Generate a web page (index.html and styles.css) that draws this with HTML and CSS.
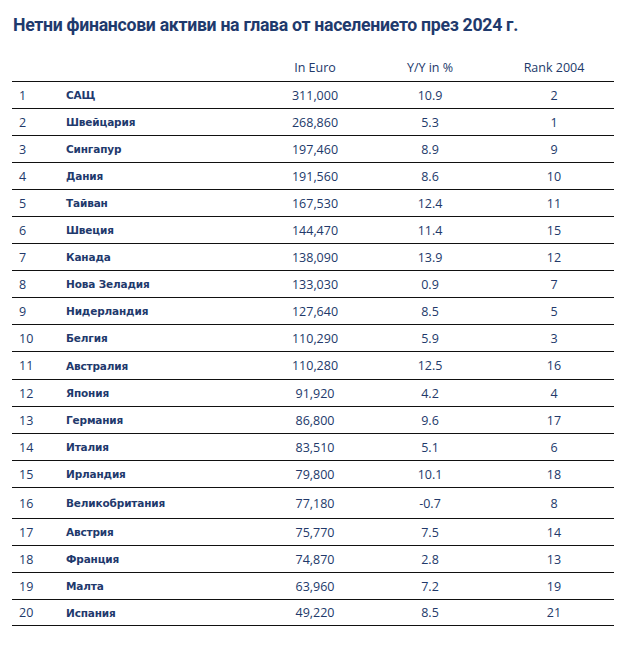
FILE: index.html
```html
<!DOCTYPE html>
<html lang="bg">
<head>
<meta charset="utf-8">
<title>Нетни финансови активи</title>
<link rel="stylesheet" href="styles.css">
</head>
<body>
<div class="page">
  <h1 class="title">Нетни финансови активи на глава от населението през 2024 г.</h1>
  <div class="table">
    <div class="row head"><span></span><span></span><span class="c-euro">In Euro</span><span class="c-yy">Y/Y in %</span><span class="c-rank">Rank 2004</span></div>
    <div class="row"><span class="c-no">1</span><span class="c-name">САЩ</span><span class="c-euro">311,000</span><span class="c-yy">10.9</span><span class="c-rank">2</span></div>
    <div class="row"><span class="c-no">2</span><span class="c-name">Швейцария</span><span class="c-euro">268,860</span><span class="c-yy">5.3</span><span class="c-rank">1</span></div>
    <div class="row"><span class="c-no">3</span><span class="c-name">Сингапур</span><span class="c-euro">197,460</span><span class="c-yy">8.9</span><span class="c-rank">9</span></div>
    <div class="row"><span class="c-no">4</span><span class="c-name">Дания</span><span class="c-euro">191,560</span><span class="c-yy">8.6</span><span class="c-rank">10</span></div>
    <div class="row"><span class="c-no">5</span><span class="c-name">Тайван</span><span class="c-euro">167,530</span><span class="c-yy">12.4</span><span class="c-rank">11</span></div>
    <div class="row"><span class="c-no">6</span><span class="c-name">Швеция</span><span class="c-euro">144,470</span><span class="c-yy">11.4</span><span class="c-rank">15</span></div>
    <div class="row"><span class="c-no">7</span><span class="c-name">Канада</span><span class="c-euro">138,090</span><span class="c-yy">13.9</span><span class="c-rank">12</span></div>
    <div class="row"><span class="c-no">8</span><span class="c-name">Нова Зеладия</span><span class="c-euro">133,030</span><span class="c-yy">0.9</span><span class="c-rank">7</span></div>
    <div class="row"><span class="c-no">9</span><span class="c-name">Нидерландия</span><span class="c-euro">127,640</span><span class="c-yy">8.5</span><span class="c-rank">5</span></div>
    <div class="row"><span class="c-no">10</span><span class="c-name">Белгия</span><span class="c-euro">110,290</span><span class="c-yy">5.9</span><span class="c-rank">3</span></div>
    <div class="row tall1"><span class="c-no">11</span><span class="c-name">Австралия</span><span class="c-euro">110,280</span><span class="c-yy">12.5</span><span class="c-rank">16</span></div>
    <div class="row"><span class="c-no">12</span><span class="c-name">Япония</span><span class="c-euro">91,920</span><span class="c-yy">4.2</span><span class="c-rank">4</span></div>
    <div class="row"><span class="c-no">13</span><span class="c-name">Германия</span><span class="c-euro">86,800</span><span class="c-yy">9.6</span><span class="c-rank">17</span></div>
    <div class="row"><span class="c-no">14</span><span class="c-name">Италия</span><span class="c-euro">83,510</span><span class="c-yy">5.1</span><span class="c-rank">6</span></div>
    <div class="row"><span class="c-no">15</span><span class="c-name">Ирландия</span><span class="c-euro">79,800</span><span class="c-yy">10.1</span><span class="c-rank">18</span></div>
    <div class="row tall"><span class="c-no">16</span><span class="c-name">Великобритания</span><span class="c-euro">77,180</span><span class="c-yy">-0.7</span><span class="c-rank">8</span></div>
    <div class="row"><span class="c-no">17</span><span class="c-name">Австрия</span><span class="c-euro">75,770</span><span class="c-yy">7.5</span><span class="c-rank">14</span></div>
    <div class="row"><span class="c-no">18</span><span class="c-name">Франция</span><span class="c-euro">74,870</span><span class="c-yy">2.8</span><span class="c-rank">13</span></div>
    <div class="row"><span class="c-no">19</span><span class="c-name">Малта</span><span class="c-euro">63,960</span><span class="c-yy">7.2</span><span class="c-rank">19</span></div>
    <div class="row short"><span class="c-no">20</span><span class="c-name">Испания</span><span class="c-euro">49,220</span><span class="c-yy">8.5</span><span class="c-rank">21</span></div>
  </div>
</div>
</body>
</html>
```

FILE: styles.css
```css
html, body {
  margin: 0;
  padding: 0;
  background: #ffffff;
}

.page {
  padding: 14px 0 0 12px;
  width: 602px;
}

.title {
  margin: 0 0 0 1px;
  font-family: Roboto, "Open Sans", sans-serif;
  font-weight: 700;
  font-size: 17.7px;
  line-height: 22px;
  letter-spacing: -0.3px;
  color: #1f3a6d;
}

.table {
  margin-top: 18px;
  width: 602px;
}

.row {
  display: grid;
  grid-template-columns: 54px 198px 102px 128px 120px;
  align-items: center;
  height: 26px;
  border-bottom: 1px solid #111111;
  font-family: "Open Sans", "Noto Sans", sans-serif;
  font-size: 12.5px;
  color: #22396a;
}

.row.head {
  height: 27px;
}

.row.tall1 { height: 27px; }
.row.tall { height: 30px; }
.row.short { height: 25px; }

.c-no {
  padding-left: 7px;
}

.c-name {
  font-family: "DejaVu Sans", Verdana, sans-serif;
  font-weight: 700;
  font-size: 10.5px;
  letter-spacing: -0.15px;
  color: #1f3a6d;
}

.c-euro,
.c-yy,
.c-rank {
  text-align: center;
}
```
